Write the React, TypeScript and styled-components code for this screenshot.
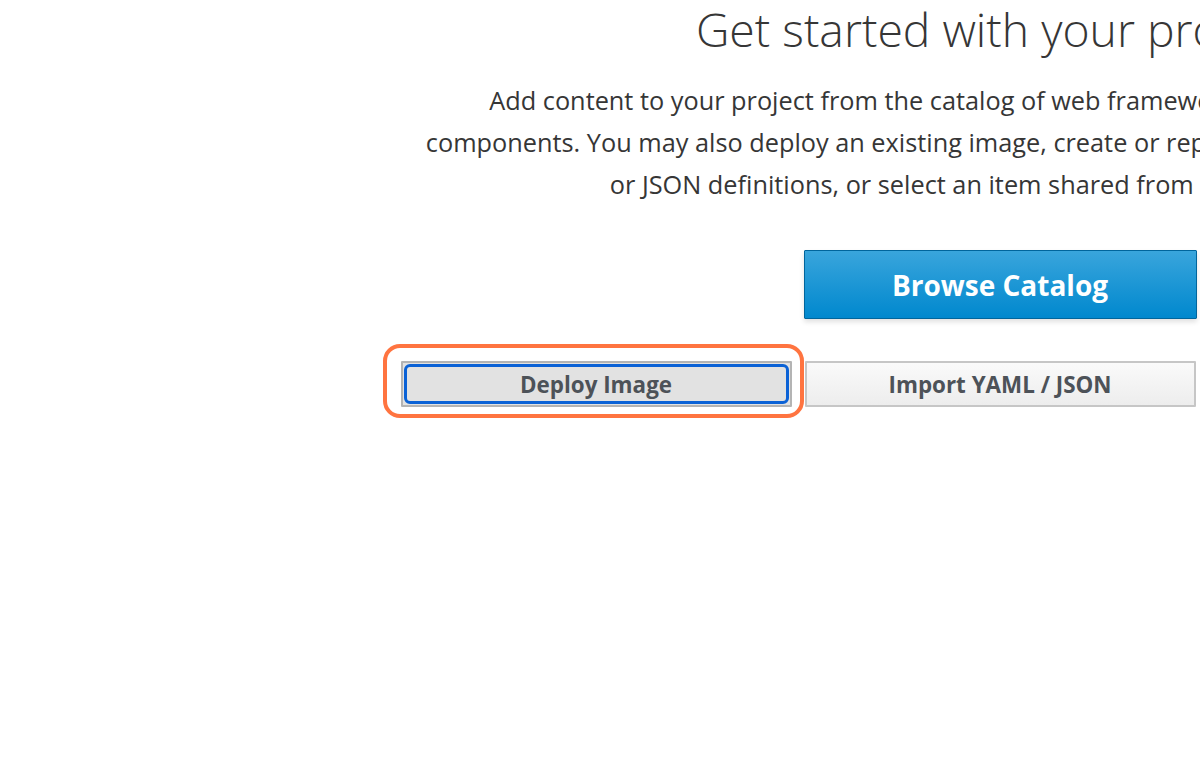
import React from "react";
import styled, { createGlobalStyle } from "styled-components";

const Global = createGlobalStyle`
  html, body {
    margin: 0;
    padding: 0;
    background: #ffffff;
    overflow: hidden;
  }
  body {
    font-family: "Open Sans", "Noto Sans", sans-serif;
    color: #363636;
  }
`;

const Page = styled.div`
  width: 1200px;
  height: 773px;
  overflow: hidden;
`;

const Column = styled.main`
  width: 1200px;
  margin-left: 400px;
  display: flex;
  flex-direction: column;
  align-items: center;
  text-align: center;
`;

const Heading = styled.h1`
  margin: 0;
  font-size: 46.3px;
  line-height: 60px;
  font-weight: 300;
  color: #363636;
  white-space: nowrap;
`;

const Lead = styled.p`
  margin: 19px 0 0;
  font-size: 25.3px;
  line-height: 42px;
  font-weight: 400;
  color: #363636;
  white-space: nowrap;
`;

const PrimaryButton = styled.button`
  margin-top: 45px;
  width: 393px;
  height: 69px;
  font-family: "Open Sans", sans-serif;
  font-size: 28px;
  font-weight: 700;
  color: #ffffff;
  background: linear-gradient(#39a5dc, #0088ce);
  border: 1px solid #00659c;
  border-radius: 1px;
  box-shadow: 0 3px 5px rgba(0, 0, 0, 0.12);
  cursor: pointer;
`;

const ButtonRow = styled.div`
  margin-top: 42px;
  display: grid;
  grid-template-columns: repeat(3, 391px);
  column-gap: 13px;
`;

const Slot = styled.div`
  position: relative;
  display: flex;
`;

const SecondaryButton = styled.button<{ $focused?: boolean }>`
  position: relative;
  flex: 1;
  height: 46px;
  font-family: "Open Sans", sans-serif;
  font-size: 22.4px;
  font-weight: 700;
  color: #4d5258;
  background: ${(p) =>
    p.$focused ? "#e2e2e2" : "linear-gradient(#fafafa, #ededed)"};
  border: 2px solid ${(p) => (p.$focused ? "#b4b4b4" : "#c6c6c6")};
  border-radius: 1px;
  cursor: pointer;
  padding: 0;

  ${(p) =>
    p.$focused &&
    `
    &::after {
      content: "";
      position: absolute;
      inset: 1px;
      border: 3px solid #0b62d6;
      border-radius: 6px;
      pointer-events: none;
    }
  `}
`;

const Highlight = styled.span`
  position: absolute;
  left: -18px;
  right: -12px;
  top: -17px;
  bottom: -11px;
  border: 4px solid #ff7440;
  border-radius: 17px;
  pointer-events: none;
`;

export default function App() {
  return (
    <Page>
      <Global />
      <Column>
        <Heading>Get started with your project.</Heading>
        <Lead>
          Add content to your project from the catalog of web frameworks,
          databases, and other
          <br />
          components. You may also deploy an existing image, create or replace
          resources from their YAML
          <br />
          or JSON definitions, or select an item shared from another project.
        </Lead>
        <PrimaryButton>Browse Catalog</PrimaryButton>
        <ButtonRow>
          <Slot>
            <SecondaryButton $focused>Deploy Image</SecondaryButton>
            <Highlight />
          </Slot>
          <Slot>
            <SecondaryButton>Import YAML / JSON</SecondaryButton>
          </Slot>
          <Slot>
            <SecondaryButton>Select from Project</SecondaryButton>
          </Slot>
        </ButtonRow>
      </Column>
    </Page>
  );
}
